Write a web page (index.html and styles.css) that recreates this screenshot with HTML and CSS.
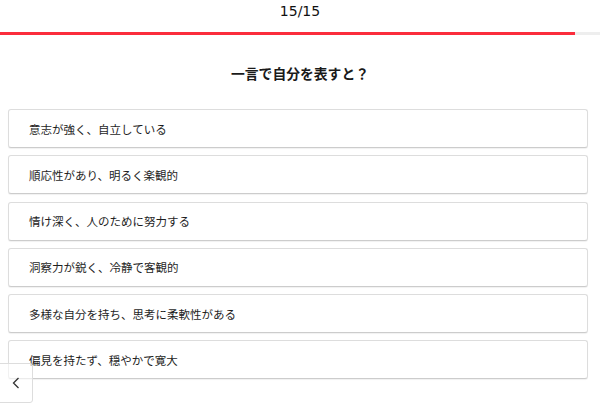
FILE: index.html
```html
<!DOCTYPE html>
<html lang="ja">
<head>
<meta charset="utf-8">
<link rel="stylesheet" href="styles.css">
</head>
<body>
<div class="page">
  <div class="counter">15/15</div>
  <div class="progress"><div class="progress-fill"></div></div>
  <h1 class="question">一言で自分を表すと？</h1>
  <ul class="answers">
    <li class="answer">意志が強く、自立している</li>
    <li class="answer">順応性があり、明るく楽観的</li>
    <li class="answer">情け深く、人のために努力する</li>
    <li class="answer">洞察力が鋭く、冷静で客観的</li>
    <li class="answer">多様な自分を持ち、思考に柔軟性がある</li>
    <li class="answer">偏見を持たず、穏やかで寛大</li>
  </ul>
  <button class="back" aria-label="戻る">
    <svg width="8" height="12" viewBox="0 0 8 12"><path d="M6.5 1 L1.5 6 L6.5 11" fill="none" stroke="#333" stroke-width="1.3"/></svg>
  </button>
</div>
</body>
</html>
```
FILE: styles.css
```css
html, body {
  margin: 0;
  padding: 0;
  background: #fff;
}
.page {
  position: relative;
  width: 600px;
  height: 410px;
  overflow: hidden;
  font-family: "Noto Sans CJK JP", "DejaVu Sans", sans-serif;
  color: #222;
}
.counter {
  height: 24px;
  line-height: 22px;
  text-align: center;
  font-family: "DejaVu Sans", sans-serif;
  font-size: 14px;
  color: #111;
}
.progress {
  margin-top: 8px;
  height: 3px;
  background: #eee;
}
.progress-fill {
  width: 575px;
  height: 100%;
  background: #fb2d3c;
}
.question {
  margin: 28px 0 0;
  height: 20px;
  line-height: 20px;
  text-align: center;
  font-size: 13.8px;
  font-weight: 700;
  color: #1a1a1a;
}
.answers {
  list-style: none;
  margin: 26px 12px 0 8px;
  padding: 0;
  display: flex;
  flex-direction: column;
  gap: 7.3px;
}
.answer {
  box-sizing: border-box;
  height: 39px;
  padding-left: 20px;
  display: flex;
  align-items: center;
  font-size: 11.5px;
  color: #1e1e1e;
  border: 1px solid #ddd;
  border-bottom-color: #ccc;
  border-radius: 3px;
  box-shadow: 0 1px 1px rgba(0,0,0,0.06);
  background: #fff;
}
.back {
  position: absolute;
  left: -1px;
  top: 363px;
  width: 34px;
  height: 40px;
  padding: 0;
  border: 1px solid #ddd;
  border-radius: 0 3px 3px 0;
  background: rgba(255,255,255,0.6);
  display: flex;
  align-items: center;
  justify-content: center;
}
```
